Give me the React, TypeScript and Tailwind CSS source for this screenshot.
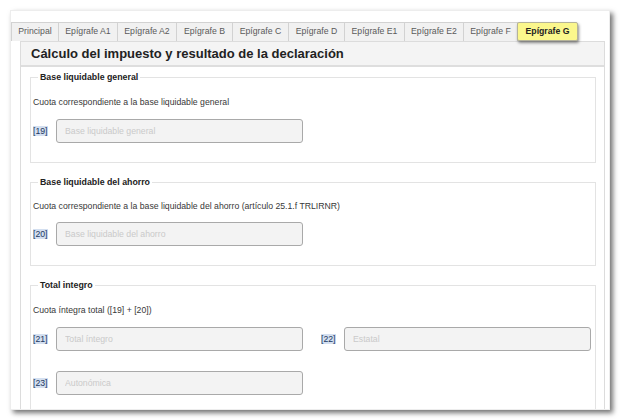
import React from "react";

const tabs: { label: string; w: string; active?: boolean }[] = [
  { label: "Principal", w: "w-[48px]" },
  { label: "Epígrafe A1", w: "w-[60px]" },
  { label: "Epígrafe A2", w: "w-[60px]" },
  { label: "Epígrafe B", w: "w-[57px]" },
  { label: "Epígrafe C", w: "w-[57px]" },
  { label: "Epígrafe D", w: "w-[57px]" },
  { label: "Epígrafe E1", w: "w-[61px]" },
  { label: "Epígrafe E2", w: "w-[60px]" },
  { label: "Epígrafe F", w: "w-[55px]" },
  { label: "Epígrafe G", w: "w-[61px]", active: true },
];

function Field({ code, placeholder }: { code: string; placeholder: string }) {
  return (
    <div className="flex items-center">
      <span className="w-[23px] text-[8.7px] leading-[12px]">
        <span className="bg-[#d3dff0] text-[#22385f]">{code}</span>
      </span>
      <input
        readOnly
        placeholder={placeholder}
        className="w-[247px] h-[24px] bg-[#f3f3f3] border border-[#a9a9a9] rounded-[3px] pl-[8px] text-[8.7px] placeholder:text-[#cacaca] outline-none"
      />
    </div>
  );
}

function Box({ legend, children }: { legend: string; children: React.ReactNode }) {
  return (
    <fieldset className="border border-[#e3e3e3] pl-[2px] pr-[2px] pb-[19px]">
      <legend className="ml-[5px] px-[2px] text-[8.8px] leading-[12px] font-bold text-[#222]">{legend}</legend>
      {children}
    </fieldset>
  );
}

export default function App() {
  return (
    <div className="w-[621px] h-[420px] bg-white pt-[10px] pl-[10px] font-['Liberation_Sans',Arial,sans-serif] text-[#383838]">
      <div className="w-[600px] h-[400px] bg-white border border-[#ededed] shadow-[3px_3px_5px_rgba(0,0,0,0.55)] overflow-hidden pt-[11px]">
        <div className="flex h-[19px]">
          {tabs.map((t, i) =>
            t.active ? (
              <div
                key={t.label}
                className={`${t.w} -ml-px h-[19px] flex items-center justify-center bg-[#fbf78c] border border-[#b5b39a] rounded-[2px] shadow-[1px_2px_3px_rgba(0,0,0,0.45)] text-[8.7px] font-bold text-[#222] relative z-10`}
              >
                {t.label}
              </div>
            ) : (
              <div
                key={t.label}
                className={`${t.w} ${i === 0 ? "" : "-ml-px"} h-[19px] flex items-center justify-center bg-[#f1f1f1] border border-b-0 border-[#d2d2d2] text-[8.7px] text-[#5a5a5a]`}
              >
                {t.label}
              </div>
            )
          )}
        </div>
        <div className="ml-[9px] w-[585px] h-[400px] border-x border-t border-[#dcdcdc] bg-white">
          <div className="h-[25px] bg-[#f4f4f4] border-b-2 border-[#dedede] pl-[10px] flex items-center text-[13px] font-bold text-[#222]">
            Cálculo del impuesto y resultado de la declaración
          </div>
          <div className="pl-[9px] pr-[8px] pt-[4px] flex flex-col gap-[13px]">
            <Box legend="Base liquidable general">
              <p className="mt-[13px] text-[8.7px] leading-[12px]">Cuota correspondiente a la base liquidable general</p>
              <div className="mt-[11px]">
                <Field code="[19]" placeholder="Base liquidable general" />
              </div>
            </Box>
            <Box legend="Base liquidable del ahorro">
              <p className="mt-[12px] text-[8.7px] leading-[12px]">
                Cuota correspondiente a la base liquidable del ahorro (artículo 25.1.f TRLIRNR)
              </p>
              <div className="mt-[10px]">
                <Field code="[20]" placeholder="Base liquidable del ahorro" />
              </div>
            </Box>
            <Box legend="Total integro">
              <p className="mt-[13px] text-[8.7px] leading-[12px]">Cuota íntegra total ([19] + [20])</p>
              <div className="mt-[11px] flex gap-[18px]">
                <Field code="[21]" placeholder="Total íntegro" />
                <Field code="[22]" placeholder="Estatal" />
              </div>
              <div className="mt-[20px]">
                <Field code="[23]" placeholder="Autonómica" />
              </div>
            </Box>
          </div>
        </div>
      </div>
    </div>
  );
}
